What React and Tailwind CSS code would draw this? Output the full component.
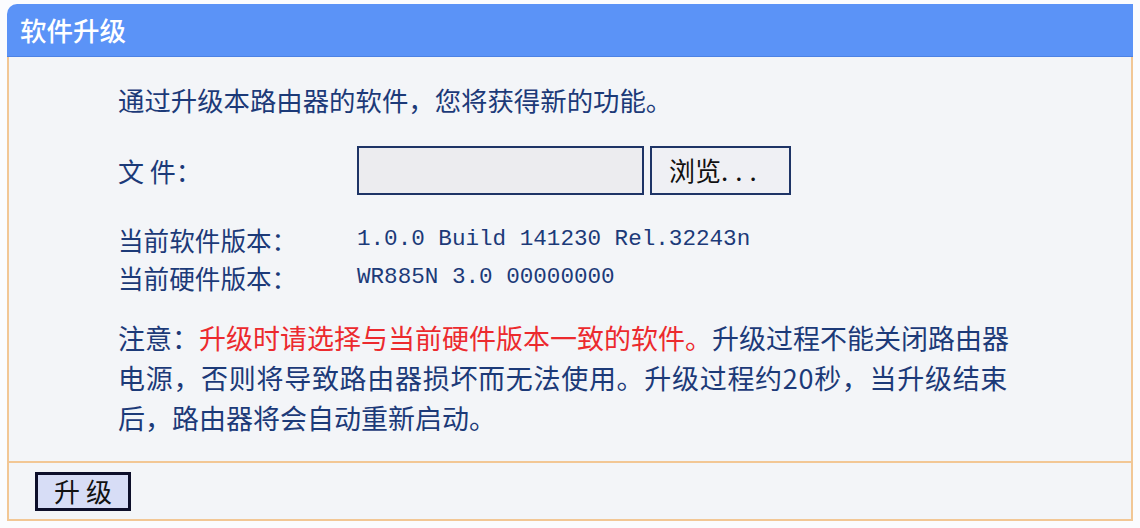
export default function App() {
  const cjk = { fontFamily: '"Noto Sans CJK SC", "Noto Sans", sans-serif' };
  const mono = { fontFamily: '"Liberation Mono", "DejaVu Sans Mono", monospace' };
  return (
    <div className="w-[1140px] h-[528px] bg-[#fbfcfe] pt-[4px] px-[7px] text-[#1c3a78]" style={cjk}>
      {/* title bar */}
      <div className="h-[53px] bg-[#5b93f7] rounded-tl-[10px] border-b border-[#4d82e4] flex items-center pl-[13px] text-white text-[26.5px] font-medium">
        软件升级
      </div>
      {/* form body */}
      <div className="h-[406px] border-x-2 border-b-2 border-[#f2c795] bg-[#f3f5f8] pl-[109px] pt-[23px] flex flex-col">
        <div className="h-[40px] leading-[40px] text-[26.4px]">通过升级本路由器的软件，您将获得新的功能。</div>
        <div className="mt-[26px] h-[49px] flex items-center">
          <div className="w-[239px] text-[26px]">文 件：</div>
          <div className="w-[287px] h-[49px] border-2 border-[#1e3466] bg-[#ececef]"></div>
          <button className="ml-[6px] w-[141px] h-[49px] border-2 border-[#1e3466] bg-[#eff0f4] text-[#111] text-[26px] flex items-center pl-[17px] pb-[2px]">
            浏览<span className="tracking-[7px]">...</span>
          </button>
        </div>
        <div className="mt-[26px] h-[38px] flex items-center">
          <div className="w-[239px] text-[25.6px]">当前软件版本：</div>
          <div className="text-[22.6px]" style={mono}>1.0.0 Build 141230 Rel.32243n</div>
        </div>
        <div className="h-[38px] flex items-center">
          <div className="w-[239px] text-[25.6px]">当前硬件版本：</div>
          <div className="text-[22.6px]" style={mono}>WR885N 3.0 00000000</div>
        </div>
        <div className="mt-[21px] text-[27px] leading-[40px] whitespace-nowrap">
          注意：<span className="text-[#ec2a2e]">升级时请选择与当前硬件版本一致的软件。</span>升级过程不能关闭路由器
          <br />
          <span className="tracking-[0.7px]">电源，否则将导致路由器损坏而无法使用。升级过程约20秒，当升级结束</span>
          <br />
          后，路由器将会自动重新启动。
        </div>
      </div>
      {/* action bar */}
      <div className="h-[58px] border-x-2 border-b-2 border-[#f2c795] bg-[#f3f5f8] pl-[26px] flex items-center">
        <button className="w-[96px] h-[39px] border-[3px] border-[#0d0f2a] bg-[#d7ddf6] text-[#111] text-[26px] leading-none flex items-center justify-center">
          升 级
        </button>
      </div>
    </div>
  );
}
